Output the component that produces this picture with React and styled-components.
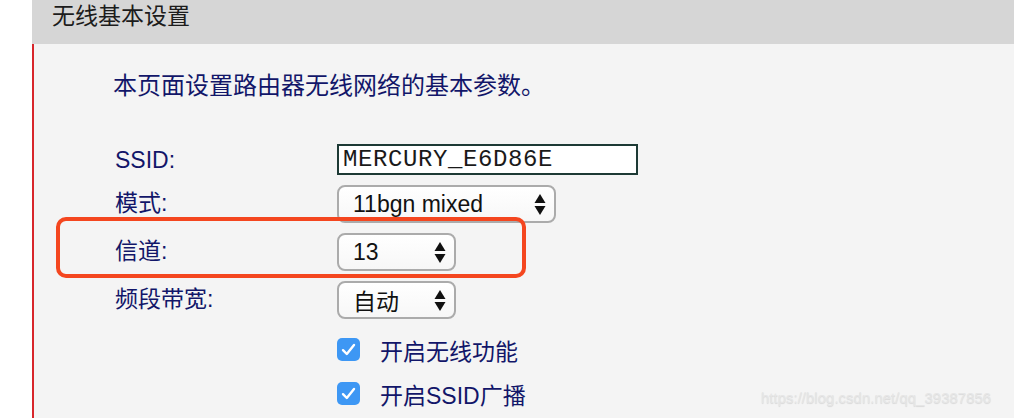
import React from "react";
import styled, { createGlobalStyle } from "styled-components";

const GlobalStyle = createGlobalStyle`
  html, body {
    margin: 0;
    padding: 0;
    background: #fff;
  }
  body {
    font-family: "Liberation Sans", "Noto Sans CJK SC", sans-serif;
  }
`;

const Page = styled.div`
  position: relative;
  display: flex;
  width: 1014px;
  height: 418px;
  overflow: hidden;
`;

const Gutter = styled.div`
  width: 32px;
  flex: none;
  background: #fff;
`;

const Panel = styled.div`
  flex: 1;
  display: flex;
  flex-direction: column;
`;

const Header = styled.div`
  height: 44px;
  flex: none;
  background: #d6d6d6;
  padding-left: 20px;
  font-size: 23px;
  line-height: 33px;
  color: #1c1c1c;
`;

const Body = styled.div`
  flex: 1;
  background: #f4f4f4;
  border-left: 2px solid #d8262b;
  padding: 27px 0 0 79px;
`;

const Intro = styled.p`
  margin: 0;
  font-size: 24px;
  line-height: 30px;
  color: #121669;
`;

const Form = styled.div`
  display: grid;
  grid-template-columns: 222px auto;
  row-gap: 10px;
  margin-top: 43px;
  padding-left: 2px;
  align-items: center;
`;

const Label = styled.div`
  font-size: 23px;
  line-height: 26px;
  color: #121669;
  margin-top: ${({ $up }) => ($up ? "-3px" : "0")};
`;

const TextInput = styled.div`
  box-sizing: border-box;
  width: 301px;
  height: 31px;
  border: 2px solid #1d3a35;
  background: #fff;
  font-family: "Liberation Mono", "DejaVu Sans Mono", monospace;
  font-size: 24px;
  line-height: 27px;
  padding-left: 4px;
  color: #1a1a1a;
  letter-spacing: 0.6px;
`;

const Select = styled.div`
  box-sizing: border-box;
  width: ${({ $w }) => $w}px;
  height: 38px;
  border: 2px solid #ababab;
  border-radius: 8px;
  background: linear-gradient(#ffffff, #f7f7f7);
  display: flex;
  align-items: center;
  justify-content: space-between;
  padding: 0 8px 0 14px;
  font-size: 23px;
  color: #111;
`;

const Arrows = () => (
  <svg width="12" height="21" viewBox="0 0 12 21">
    <path d="M6 0 L11.5 9 L0.5 9 Z" fill="#111" />
    <path d="M0.5 12 L11.5 12 L6 21 Z" fill="#111" />
  </svg>
);

const Checks = styled.div`
  display: flex;
  flex-direction: column;
  gap: 21px;
  margin: 19px 0 0 224px;
`;

const CheckRow = styled.label`
  display: flex;
  align-items: center;
  gap: 20px;
  height: 23px;
  font-size: 23px;
  color: #121669;
`;

const Box = styled.span`
  width: 23px;
  height: 23px;
  border-radius: 5px;
  background: #3d97f4;
  display: flex;
  align-items: center;
  justify-content: center;
  flex: none;
`;

const Tick = () => (
  <svg width="15" height="13" viewBox="0 0 15 13">
    <path
      d="M2 7.2 L5.8 11 L13 2"
      fill="none"
      stroke="#fff"
      strokeWidth="2.4"
      strokeLinecap="round"
      strokeLinejoin="round"
    />
  </svg>
);

const Highlight = styled.div`
  position: absolute;
  left: 56px;
  top: 217px;
  width: 470px;
  height: 61px;
  box-sizing: border-box;
  border: 4px solid #f4461f;
  border-radius: 10px;
  pointer-events: none;
`;

const Watermark = styled.div`
  position: absolute;
  left: 761px;
  top: 389px;
  font-size: 15px;
  color: #e6e6e6;
  text-shadow: 0 1px 1px rgba(0, 0, 0, 0.12);
  white-space: nowrap;
`;

const Check = ({ children }) => (
  <CheckRow>
    <Box>
      <Tick />
    </Box>
    {children}
  </CheckRow>
);

export default function App() {
  return (
    <>
      <GlobalStyle />
      <Page>
        <Gutter />
        <Panel>
          <Header>无线基本设置</Header>
          <Body>
            <Intro>本页面设置路由器无线网络的基本参数。</Intro>
            <Form>
              <Label>SSID:</Label>
              <TextInput>MERCURY_E6D86E</TextInput>
              <Label $up>模式:</Label>
              <Select $w={219}>
                11bgn mixed
                <Arrows />
              </Select>
              <Label $up>信道:</Label>
              <Select $w={119}>
                13
                <Arrows />
              </Select>
              <Label $up>频段带宽:</Label>
              <Select $w={119}>
                自动
                <Arrows />
              </Select>
            </Form>
            <Checks>
              <Check>开启无线功能</Check>
              <Check>开启SSID广播</Check>
            </Checks>
          </Body>
        </Panel>
        <Highlight />
        <Watermark>https://blog.csdn.net/qq_39387856</Watermark>
      </Page>
    </>
  );
}
